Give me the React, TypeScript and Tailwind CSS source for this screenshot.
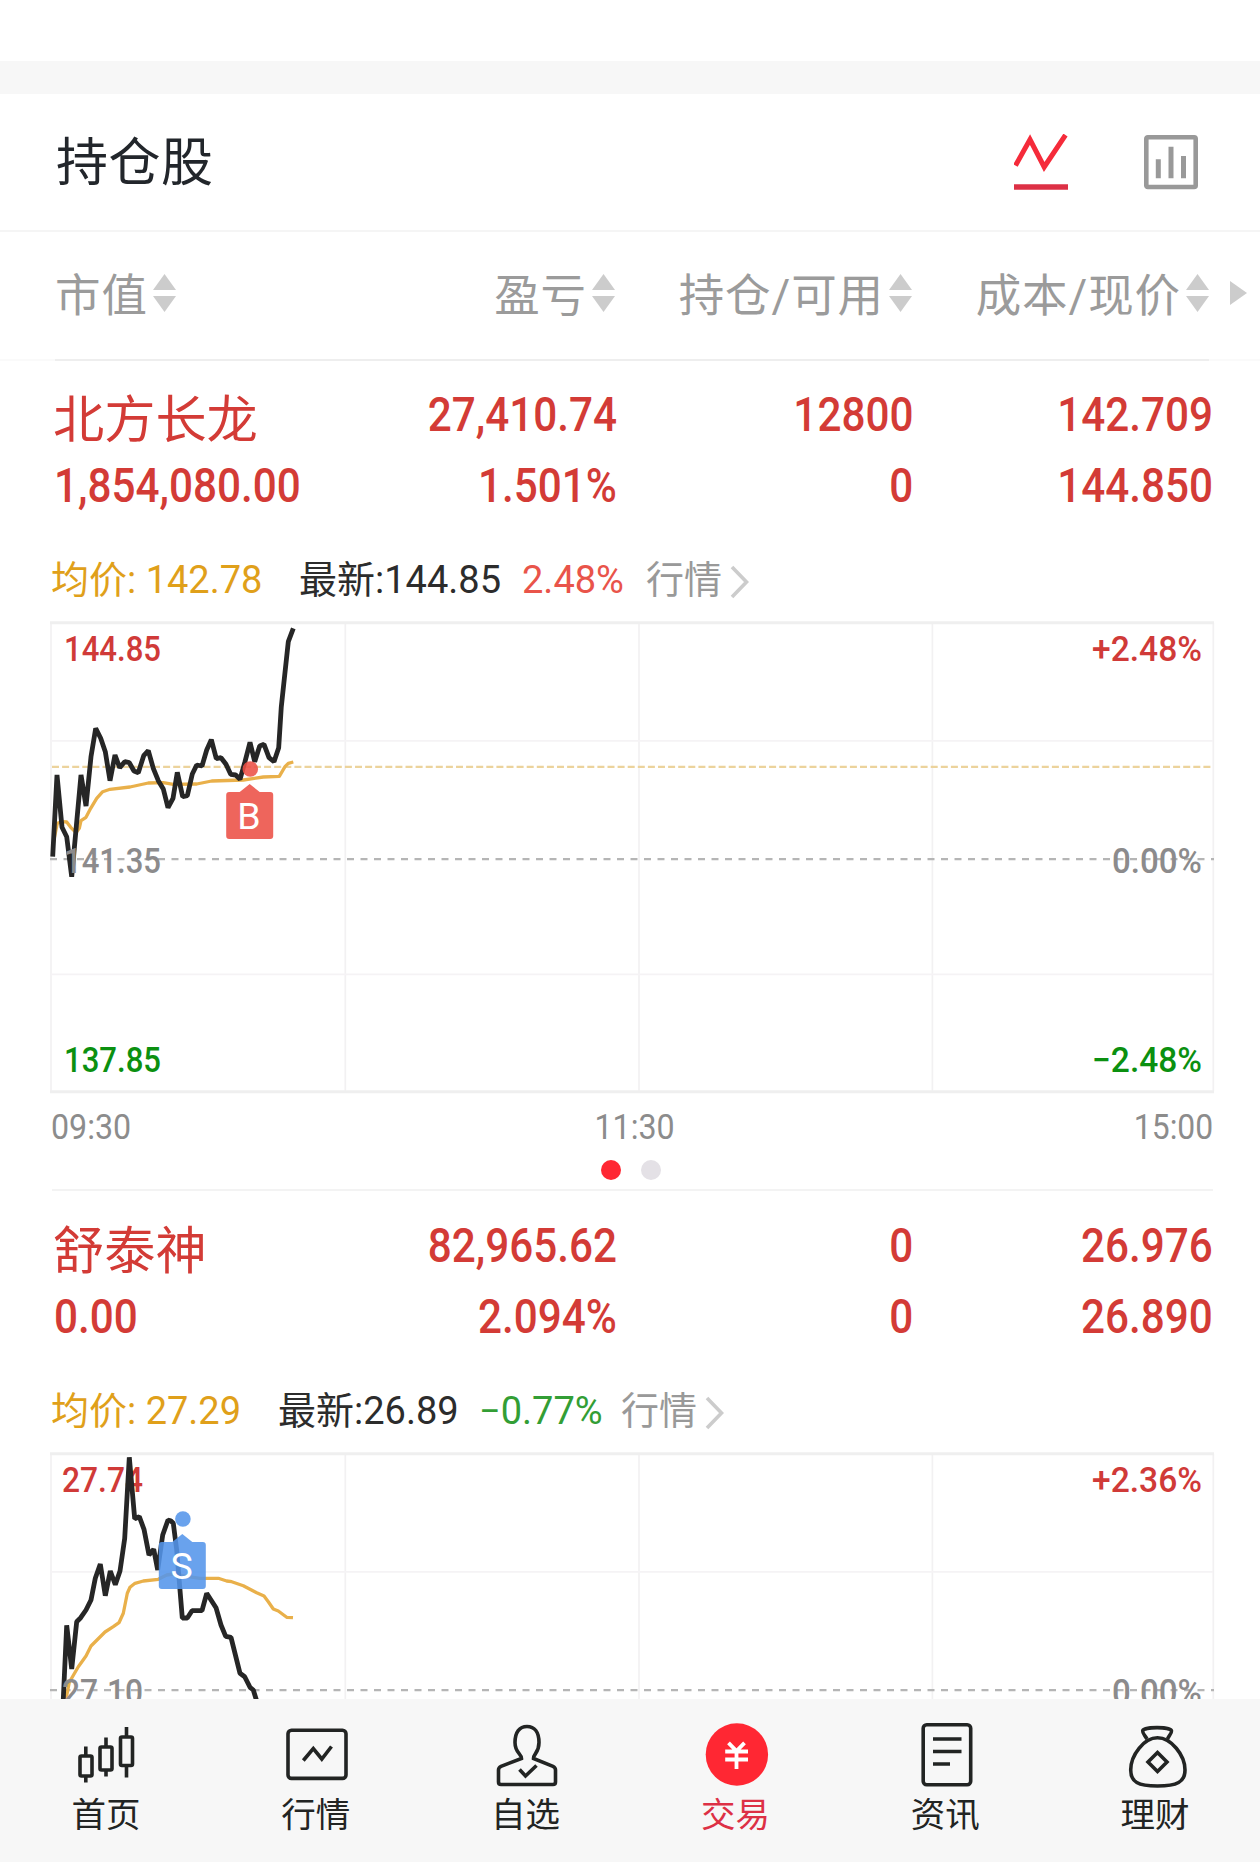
import React from 'react';

interface ChartData {
  high: string;
  base: string;
  low?: string;
  range: string;
  labelX: number;
  price: string;
  average: string;
  avgLine?: number;
  marker: { text: string; color: string; x: number; dotY: number; boxY: number };
}

interface Holding {
  name: string;
  marketValue: string;
  profit: string;
  profitRate: string;
  amount: string;
  available: string;
  cost: string;
  current: string;
  average: string;
  latest: string;
  change: string;
  changeColor: string;
  averageWidth: string;
  latestWidth: string;
  changeWidth: string;
  times?: string[];
  chart: ChartData;
}

const holdings: Holding[] = [
  {
    name: '北方长龙',
    marketValue: '1,854,080.00',
    profit: '27,410.74',
    profitRate: '1.501%',
    amount: '12800',
    available: '0',
    cost: '142.709',
    current: '144.850',
    average: '142.78',
    latest: '144.85',
    change: '2.48%',
    changeColor: 'text-[#e9544a]',
    averageWidth: 'w-[248px]',
    latestWidth: 'w-[223px]',
    changeWidth: 'w-[124px]',
    times: ['09:30', '11:30', '15:00'],
    chart: {
      high: '144.85',
      base: '141.35',
      low: '137.85',
      range: '2.48%',
      labelX: 64,
      avgLine: 145.8,
      price:
        '52.7,235.7 57,154 62,206.3 66.7,215.7 71.7,255.7 81,154 86,185 91,135.7 95.7,107.3 100.7,117.3 105.3,130.7 110,159.7 115,134 119.7,146.7 124.7,140.7 129.3,141.7 134,150 138.3,151.7 143.7,134.7 148.3,129.7 153.3,147.3 158.3,159.7 163.3,168 168,186.7 173,177.3 177.3,151.3 182.7,175.7 187.3,174.7 192.3,153 196.7,144 202,145 206.7,129 211.3,118.7 216.3,137.7 221,136.7 226,143.3 230.7,153.3 235.7,154 240,158.3 245,140.7 250,121.3 254.7,140.7 259.7,125 264,123.3 269,136.7 274,140.7 278.7,126.7 281.3,85.7 288.3,20.7 293.3,7.3',
      average:
        '53.3,222.3 57.3,202.3 61.7,200.7 66.7,201 70.7,206.3 76,211.7 79.3,207.3 81,199.7 86,196.3 90.7,187.3 96.7,177.3 102.7,170.7 110,168.3 130,166 148.3,162 163.3,161.7 173.3,163.3 196.7,163 211.7,160 243.3,159 263.3,156 279.3,155.3 285,145.7 288.3,142.3 293.3,141',
      marker: { text: 'B', color: '#ec5046', x: 249.7, dotY: 148, boxY: 171 },
    },
  },
  {
    name: '舒泰神',
    marketValue: '0.00',
    profit: '82,965.62',
    profitRate: '2.094%',
    amount: '0',
    available: '0',
    cost: '26.976',
    current: '26.890',
    average: '27.29',
    latest: '26.89',
    change: '−0.77%',
    changeColor: 'text-[#339e35]',
    averageWidth: 'w-[227px]',
    latestWidth: 'w-[201px]',
    changeWidth: 'w-[142px]',
    chart: {
      high: '27.74',
      base: '27.10',
      range: '2.36%',
      labelX: 62,
      price:
        '63.3,247 66.7,173.3 71.7,217 76.7,169.7 80.7,165.7 86,158 91,148 95.3,126.3 100.3,112 105.3,143.7 110.3,119 115.3,132.7 120,119 124.7,86.3 129.3,5.3 134.7,66.7 139.3,64.7 144,77.3 149,103 153.7,97.3 157.7,118 162.7,83 168,68 170.7,68.7 173.3,71.3 176.7,98 182.3,166 187.3,166 192,158.7 202,158.7 206.7,141.3 216,155.7 221,173 225.7,184.3 231,185.3 240,221.3 244.7,224.7 250,235.3 253.3,238 256.7,249',
      average:
        '66,247 69.3,230.3 78.3,214.7 86,204 91,194 105,180 113.3,174.7 119,170.7 123.3,161.3 127.3,141.3 130,135.3 135,131.3 143.3,129 158.3,127.3 166.7,123 173.3,122 186.7,124.3 200,126.3 218.3,126.3 226.7,129 231.7,129.7 243.3,133.7 256.7,140.7 264,144 268.3,149.7 273.3,157 278.3,159 286.7,165.3 293,165.7',
      marker: { text: 'S', color: '#5495ea', x: 182.3, dotY: 67, boxY: 90 },
    },
  },
];

const SortArrows = () => (
  <svg className="ml-[5px] -mt-[9px] shrink-0" width="23" height="38" viewBox="0 0 23 38" fill="#cccccc">
    <path d="M11.5 0 23 16H0z" />
    <path d="M0 22h23L11.5 38z" />
  </svg>
);

const HeaderCell: React.FC<{ label: string; className: string }> = ({ label, className }) => (
  <div className={`flex items-center ${className}`}>
    <span>{label}</span>
    <SortArrows />
  </div>
);

const Figure: React.FC<{ value: string; className: string }> = ({ value, className }) => (
  <div className={`whitespace-nowrap text-right ${className}`}>
    <span className="inline-block origin-right scale-x-[0.88]">{value}</span>
  </div>
);

const labelWidth = (value: string) => (value.length === 6 ? 97 : 81);

const Chart: React.FC<{ data: ChartData }> = ({ data }) => {
  const { marker } = data;
  return (
    <svg
      className="block shrink-0"
      width="1260"
      height="473"
      viewBox="0 0 1260 473"
      fill="none"
      fontFamily="Roboto, 'Liberation Sans', sans-serif"
      fontSize="35"
      fontWeight="500"
    >
      <path d="M51 2V470M345.3 2V470M639 2V470M932.4 2V470M1213.3 2V470" stroke="#f2f1f2" strokeWidth="1.7" />
      <path d="M51 119.8H1213M51 353.3H1213" stroke="#f5f3f5" strokeWidth="1.7" />
      <path d="M50 1.8H1214M50 470.7H1214" stroke="#efefef" strokeWidth="3" />
      {data.avgLine && (
        <path d={`M52 ${data.avgLine}H1213`} stroke="#ecd39c" strokeWidth="2.2" strokeDasharray="7 3.1" />
      )}
      <path d="M50 238.2H1214" stroke="#b5b5b5" strokeWidth="2.2" strokeDasharray="7 6.5" />

      <g fill="#d03a38">
        <text x={data.labelX} y="39.5" textLength={labelWidth(data.high)} lengthAdjust="spacingAndGlyphs">{data.high}</text>
        <text x="1092" y="39.5" textLength="110" lengthAdjust="spacingAndGlyphs">+{data.range}</text>
      </g>
      {data.low && (
        <g fill="#0b9010">
          <text x={data.labelX} y="450.7" textLength={labelWidth(data.low)} lengthAdjust="spacingAndGlyphs">{data.low}</text>
          <text x="1092" y="450.7" textLength="110" lengthAdjust="spacingAndGlyphs">−{data.range}</text>
        </g>
      )}

      <polyline points={data.average} stroke="#e9b04a" strokeWidth="3.3" strokeLinejoin="round" />
      <polyline points={data.price} stroke="#262626" strokeWidth="4.8" strokeLinejoin="bevel" />

      <g fill="#8c8b8c">
        <text x={data.labelX} y="251.6" textLength={labelWidth(data.base)} lengthAdjust="spacingAndGlyphs">{data.base}</text>
        <text x="1112" y="251.6" textLength="90" lengthAdjust="spacingAndGlyphs">0.00%</text>
      </g>

      <g fill={marker.color} fillOpacity="0.88">
        <circle cx={marker.x + 0.6} cy={marker.dotY} r="7.8" />
        <path
          d={`M${marker.x} ${marker.boxY - 8}l10 8h10.500a3 3 0 0 1 3 3v41a3 3 0 0 1 -3 3h-41a3 3 0 0 1 -3 -3v-41a3 3 0 0 1 3 -3h10.500z`}
        />
      </g>
      <text x={marker.x - 0.7} y={marker.boxY + 37} fill="#ffffff" fontSize="37.5" fontWeight="400" textAnchor="middle">
        {marker.text}
      </text>
    </svg>
  );
};

const HoldingSection: React.FC<{ item: Holding }> = ({ item }) => (
  <section className="flex shrink-0 flex-col pb-[2px]">
    <div className="flex h-[71px] mt-[17px] pl-[53px] text-[48px] leading-[71px] font-medium text-[#d33b36]">
      <div className="w-[264px] pt-[6px] text-[51.2px] font-normal whitespace-nowrap">{item.name}</div>
      <Figure value={item.profit} className="w-[300px]" />
      <Figure value={item.amount} className="w-[296px]" />
      <Figure value={item.cost} className="w-[300px]" />
    </div>
    <div className="flex h-[71px] pl-[54px] text-[48px] leading-[71px] font-medium text-[#d33b36]">
      <div className="w-[263px] whitespace-nowrap">
        <span className="inline-block origin-left scale-x-[0.88]">{item.marketValue}</span>
      </div>
      <Figure value={item.profitRate} className="w-[300px]" />
      <Figure value={item.available} className="w-[296px]" />
      <Figure value={item.current} className="w-[300px]" />
    </div>
    <div className="flex h-[100px] items-center pt-[18px] pl-[51px] text-[38px] whitespace-nowrap">
      <span className={`text-[#e0a01a] ${item.averageWidth}`}>均价: {item.average}</span>
      <span className={`text-[#2c2c2c] ${item.latestWidth}`}>最新:{item.latest}</span>
      <span className={`${item.changeColor} ${item.changeWidth}`}>{item.change}</span>
      <span className="text-[#999999]">行情</span>
      <svg className="ml-[8px] mt-[4px]" width="20" height="34" viewBox="0 0 20 34" fill="none" stroke="#cccccc" strokeWidth="3.6">
        <path d="M2 2l14.5 15L2 32" />
      </svg>
    </div>
    <Chart data={item.chart} />
    {item.times && (
      <>
        <div className="mt-[12px] flex h-[44px] items-center justify-between pl-[51px] pr-[47px] text-[35px] text-[#8c8c8c]">
          <span className="inline-block origin-left scale-x-[0.92]">{item.times[0]}</span>
          <span className="ml-[6px] inline-block scale-x-[0.92]">{item.times[1]}</span>
          <span className="inline-block origin-right scale-x-[0.91]">{item.times[2]}</span>
        </div>
        <div className="ml-[52px] mr-[47px] flex h-[41px] items-center justify-center gap-5 border-b-2 border-[#f3f3f3] pr-[3px]">
          <span className="size-5 rounded-full bg-[#ff2733]" />
          <span className="size-5 rounded-full bg-[#e4e1e6]" />
        </div>
      </>
    )}
  </section>
);

// Each tab icon is drawn in a 72x72 box.
const icons = {
  home: (
    <>
      <rect x="10" y="36" width="12" height="20" rx="1.5" />
      <rect x="30" y="27" width="12" height="23" rx="1.5" />
      <rect x="50.5" y="17" width="12" height="28.5" rx="1.5" />
      <path d="M15.800 26.500V36M15.800 56V62.500M36 17.500V27M36 50V56.500M56.500 7V17M56.500 45.500V57.500" />
    </>
  ),
  quotes: (
    <>
      <rect x="8" y="10.200" width="58" height="48.200" rx="3.500" />
      <path d="M23.300 40.500 33.300 28.500 41.800 39 51.500 26.500" />
    </>
  ),
  watchlist: (
    <>
      <path d="M31.500 38.500C31.500 33.500 25 33 25 22.500 25 12 29.500 6.500 37 6.500S49 12 49 22.500C49 33 43.500 33.500 43.500 38.500L63 46.300Q65.500 47.500 65.500 50V62Q65.500 64.500 63 64.500H11Q8.500 64.500 8.500 62V50Q8.500 47.500 11 46.300Z" />
      <path d="M29.500 49.500 35.500 56 46.500 45.500" />
    </>
  ),
  trade: (
    <>
      <circle cx="37.900" cy="34.500" r="31.200" fill="#ff2733" stroke="none" />
      <path d="M29.500 22.800 37.500 31 45.500 22.800M26.200 31.500H49M26.200 39.500H49M37.500 31V49" stroke="#ffffff" strokeWidth="3.800" />
    </>
  ),
  news: (
    <>
      <rect x="14.200" y="4.700" width="47.500" height="60" rx="3.500" />
      <path d="M24 19H52.500M24 31.500H52.500M24 44H41" />
    </>
  ),
  wealth: (
    <>
      <path d="M28 19C26 15.500 23.500 13.500 23.700 11 24 6.500 52 6.500 52.500 11 52.700 13.500 50 15.500 48.500 19" />
      <path d="M38.500 17.800C25 17.800 11.700 35 11.700 50 11.700 62 19 66 38.500 66S66 62 66 50C66 35 52 17.800 38.500 17.800Z" />
      <path d="M38.500 32.500 48 42 38.500 51.500 29 42Z" />
    </>
  ),
};

const tabs = [
  { label: '首页', icon: icons.home, active: false },
  { label: '行情', icon: icons.quotes, active: false },
  { label: '自选', icon: icons.watchlist, active: false },
  { label: '交易', icon: icons.trade, active: true },
  { label: '资讯', icon: icons.news, active: false },
  { label: '理财', icon: icons.wealth, active: false },
];

const App: React.FC = () => {
  return (
    <div className="flex h-[1862px] w-[1260px] flex-col overflow-hidden bg-white font-['Roboto','Noto_Sans_CJK_SC',sans-serif]">
      <main className="flex min-h-0 flex-1 flex-col overflow-hidden">
        <div className="mt-[61px] h-[33px] shrink-0 bg-[#f7f7f7]" />

        <header className="flex h-[138px] shrink-0 items-center justify-between border-b-2 border-[#f5f5f5] pl-[56px] pr-[62px]">
          <h1 className="pt-[4px] text-[52px] tracking-[0.5px] text-[#22262b]">持仓股</h1>
          <div className="flex items-center gap-[75px]">
            <svg width="55" height="56" viewBox="0 0 55 56" fill="none">
              <path d="M1.500 31.500 16 5.500 30.200 33 51.500 1" stroke="#f52b3a" strokeWidth="5" />
              <path d="M-0.500 53H54" stroke="#dd3045" strokeWidth="5.600" />
            </svg>
            <svg width="54" height="56" viewBox="0 0 54 56" fill="none" stroke="#999999" strokeWidth="4.600">
              <rect x="2.300" y="3.300" width="49.400" height="49.700" rx="1.500" />
              <path d="M14.300 25.300V44.300M27 12.700V44.300M39.500 22V44.300" strokeWidth="5" />
            </svg>
          </div>
        </header>

        <div className="flex h-[127px] shrink-0 items-center pt-[4px] pl-[55px] text-[45.5px] tracking-[0.9px] whitespace-nowrap text-[#9b9b9b]">
          <HeaderCell label="市值" className="w-[260px]" />
          <HeaderCell label="盈亏" className="w-[300px] justify-end" />
          <HeaderCell label="持仓/可用" className="w-[297px] justify-end" />
          <HeaderCell label="成本/现价" className="w-[297px] justify-end" />
          <svg className="ml-[21px] -mt-[9px]" width="17" height="24" viewBox="0 0 17 24" fill="#cccccc">
            <path d="M0 0 17 12 0 24z" />
          </svg>
        </div>
        <div className="mb-px flex h-[2px] shrink-0 bg-[#fafafa] pl-[55px] pr-[51px]">
          <div className="flex-1 bg-[#eeeeee]" />
        </div>

        {holdings.map((item) => (
          <HoldingSection key={item.name} item={item} />
        ))}
      </main>

      <nav className="grid h-[163px] shrink-0 grid-cols-6 bg-[#f7f7f7] pt-[21px] pl-px">
        {tabs.map((tab) => (
          <div
            key={tab.label}
            className={`flex flex-col items-center text-[34.5px] leading-[46px] ${tab.active ? 'text-[#dd3045]' : 'text-[#222423]'}`}
          >
            <svg width="72" height="72" viewBox="0 0 72 72" fill="none" stroke="#222423" strokeWidth="3.6">
              {tab.icon}
            </svg>
            <span>{tab.label}</span>
          </div>
        ))}
      </nav>
    </div>
  );
};

export default App;
